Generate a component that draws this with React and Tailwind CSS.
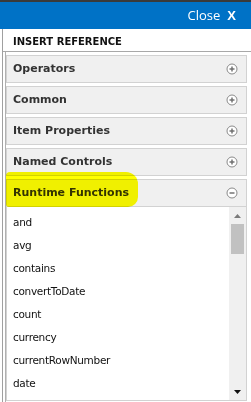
import React from 'react';

const sections = ['Operators', 'Common', 'Item Properties', 'Named Controls'];
const fns = ['and', 'avg', 'contains', 'convertToDate', 'count', 'currency', 'currentRowNumber', 'date'];

const CircleIcon = ({ minus }) => (
  <svg width="12" height="12" viewBox="0 0 12 12" className="shrink-0">
    <circle cx="6" cy="6" r="5" fill="#fff" stroke="#8a8a8a" strokeWidth="1" />
    <path d="M3.5 6h5" stroke="#6a6a6a" strokeWidth="1.4" />
    {!minus && <path d="M6 3.5v5" stroke="#6a6a6a" strokeWidth="1.4" />}
  </svg>
);

const Header = ({ title, minus }) => (
  <div className="h-[28px] mt-[3px] mr-[4px] bg-[#f0f0f0] border border-[#d2d2d2] flex items-center justify-between pl-[6px] pr-[8px]">
    <span className="text-[11px] font-bold text-[#333]">{title}</span>
    <CircleIcon minus={minus} />
  </div>
);

export default function App() {
  return (
    <div className="w-[251px] h-[402px] overflow-hidden bg-white flex flex-col" style={{ fontFamily: '"DejaVu Sans", Verdana, sans-serif' }}>
      <div className="h-[2px] bg-[#3a3a3a]" />
      <div className="h-[27px] bg-[#0072c6] flex items-center justify-end pr-[15px] gap-[7px] text-white">
        <span className="text-[13px]" style={{ fontFamily: '"Open Sans", sans-serif' }}>Close</span>
        <span className="text-[13px] font-bold" style={{ fontFamily: '"Liberation Sans", sans-serif' }}>X</span>
      </div>
      <div className="flex-1 ml-[2px] border-l border-[#a0a0a0] flex flex-col">
        <div className="h-[22px] flex items-center pl-[10px] pt-[3px] text-[10px] font-bold text-[#111]">INSERT REFERENCE</div>
        <div className="flex-1 border-t border-[#a8a8a8] pl-[2px]">
          <div className="h-full border-l border-[#b0b0b0] flex flex-col">
            {sections.map(s => <Header key={s} title={s} />)}
            <div className="relative">
              <Header title="Runtime Functions" minus />
              <div className="absolute z-20 left-0 top-[-4px] w-[132px] h-[35px] bg-[#ffff00] mix-blend-multiply rounded-[4px_12px_10px_3px]" />
            </div>
            <div className="mr-[4px] h-[194px] border border-t-0 border-[#d2d2d2] flex">
              <div className="flex-1 pt-[4px]">
                {fns.map(f => (
                  <div key={f} className="h-[23px] flex items-center pl-[6px] text-[10.5px] tracking-[-0.3px] text-[#111]">{f}</div>
                ))}
              </div>
              <div className="w-[17px] bg-[#f0f0f0] flex flex-col items-center">
                <div className="h-[17px] flex items-center justify-center">
                  <svg width="7" height="4" viewBox="0 0 7 4"><path d="M3.5 0L7 4H0z" fill="#7a7a7a" /></svg>
                </div>
                <div className="w-[13px] h-[30px] bg-[#c1c1c1]" />
                <div className="flex-1" />
                <div className="h-[17px] flex items-center justify-center">
                  <svg width="7" height="4" viewBox="0 0 7 4"><path d="M0 0H7L3.5 4z" fill="#111" /></svg>
                </div>
              </div>
            </div>
          </div>
        </div>
      </div>
    </div>
  );
}
